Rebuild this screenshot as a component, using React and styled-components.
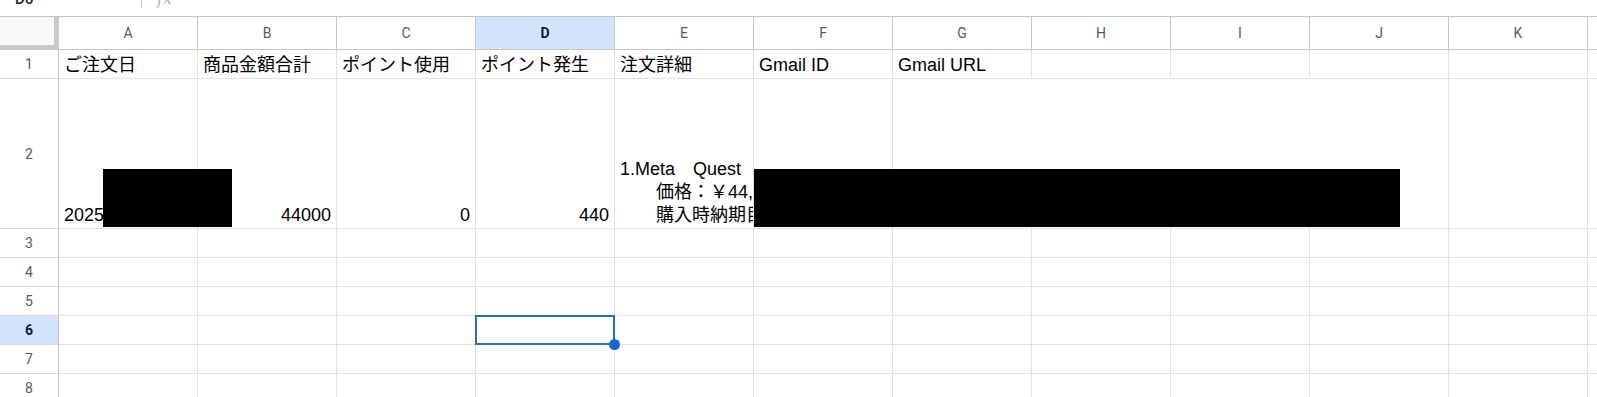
import React from 'react';
import styled, { createGlobalStyle } from 'styled-components';

const GlobalStyle = createGlobalStyle`
  html, body { margin: 0; padding: 0; background: #fff; overflow: hidden; }
  body { font-family: 'Liberation Sans', 'Noto Sans CJK JP', sans-serif; }
  * { box-sizing: border-box; }
`;

const Page = styled.div`
  width: 1597px;
  height: 397px;
  overflow: hidden;
  background: #fff;
`;

const FormulaBar = styled.div`
  height: 41px;
  margin-top: -24px;
  padding-top: 5px;
  border-bottom: 1px solid #c4c7c5;
  display: flex;
  align-items: center;
`;

const NameBox = styled.div`
  width: 141px;
  padding-left: 15px;
  font-family: Roboto, 'Liberation Sans', sans-serif;
  font-size: 15px;
  font-weight: 500;
  color: #1f1f1f;
`;

const Divider = styled.div`
  width: 1px;
  height: 18px;
  background: #c4c7c5;
`;

const Fx = styled.div`
  margin-left: 15px;
  font-family: 'DejaVu Serif', serif;
  font-style: italic;
  font-size: 16px;
  color: #b0b3b8;
`;

const Sheet = styled.div`
  display: grid;
  grid-template-columns: 59px repeat(11, 139px) 1fr;
  grid-template-rows: 33px 29px 150px repeat(6, 29px);
`;

const Corner = styled.div`
  background: #f8f9fa;
  border-right: 5px solid #c7c9cb;
  border-bottom: 5px solid #c7c9cb;
`;

const ColHeader = styled.div`
  display: flex;
  align-items: center;
  justify-content: center;
  border-right: 1px solid #c4c7c5;
  border-bottom: 1px solid #c4c7c5;
  font-family: Roboto, 'Liberation Sans', sans-serif;
  font-size: 14px;
  color: ${(p) => (p.$selected ? '#041e49' : '#575a5c')};
  font-weight: ${(p) => (p.$selected ? 700 : 400)};
  background: ${(p) => (p.$selected ? '#d3e3fd' : '#fff')};
`;

const RowHeader = styled.div`
  display: flex;
  align-items: center;
  justify-content: center;
  border-right: 1px solid #c4c7c5;
  border-bottom: 1px solid #d6d8da;
  font-family: Roboto, 'Liberation Sans', sans-serif;
  font-size: 14px;
  color: ${(p) => (p.$selected ? '#041e49' : '#575a5c')};
  font-weight: ${(p) => (p.$selected ? 700 : 400)};
  background: ${(p) => (p.$selected ? '#d3e3fd' : '#fff')};
`;

const Cell = styled.div`
  position: relative;
  display: flex;
  align-items: flex-end;
  justify-content: ${(p) => (p.$align === 'right' ? 'flex-end' : 'flex-start')};
  grid-column: ${(p) => (p.$span ? `span ${p.$span}` : 'auto')};
  padding: 0 ${(p) => (p.$clip ? 0 : 5)}px 1px 5px;
  border-right: 1px solid #e1e1e1;
  border-bottom: 1px solid #e1e1e1;
  font-size: 18px;
  line-height: 23px;
  color: #000;
  white-space: pre;
  min-width: 0;
`;

const CellText = styled.div`
  overflow: hidden;
  max-width: 100%;
`;

const Redaction = styled.div`
  position: absolute;
  z-index: 2;
  top: 90px;
  height: 58px;
  left: ${(p) => p.$left}px;
  width: ${(p) => p.$width}px;
  background: #000;
`;

const Selection = styled.div`
  position: absolute;
  z-index: 3;
  top: -1px;
  left: -1px;
  right: -1px;
  bottom: -1px;
  border: 2px solid #2f6cc0;
`;

const FillHandle = styled.div`
  position: absolute;
  right: -7px;
  bottom: -7px;
  width: 11px;
  height: 11px;
  border-radius: 50%;
  background: #1a62d6;
`;

const COLS = ['A', 'B', 'C', 'D', 'E', 'F', 'G', 'H', 'I', 'J', 'K', ''];

const ROW1 = ['ご注文日', '商品金額合計', 'ポイント使用', 'ポイント発生', '注文詳細', 'Gmail ID', 'Gmail URL', '', '', '', '', ''];

const DETAIL = '1.Meta\u3000Quest\n\u3000\u3000価格：￥44,000\n\u3000\u3000購入時納期目安：';

function EmptyRow({ n, selectedCol }) {
  return (
    <>
      <RowHeader $selected={n === 6}>{n}</RowHeader>
      {COLS.map((c, i) => (
        <Cell key={i}>
          {n === 6 && c === selectedCol && (
            <Selection>
              <FillHandle />
            </Selection>
          )}
        </Cell>
      ))}
    </>
  );
}

export default function App() {
  return (
    <Page>
      <GlobalStyle />
      <FormulaBar>
        <NameBox>D6</NameBox>
        <Divider />
        <Fx>fx</Fx>
      </FormulaBar>
      <Sheet>
        <Corner />
        {COLS.map((c, i) => (
          <ColHeader key={i} $selected={c === 'D'}>{c}</ColHeader>
        ))}

        <RowHeader>1</RowHeader>
        {ROW1.map((t, i) => (
          <Cell key={i}>
            <CellText>{t}</CellText>
          </Cell>
        ))}

        <RowHeader>2</RowHeader>
        <Cell>
          <CellText>2025</CellText>
          <Redaction $left={44} $width={129} />
        </Cell>
        <Cell $align="right"><CellText>44000</CellText></Cell>
        <Cell $align="right"><CellText>0</CellText></Cell>
        <Cell $align="right"><CellText>440</CellText></Cell>
        <Cell $clip><CellText>{DETAIL}</CellText></Cell>
        <Cell>
          <Redaction $left={0} $width={646} />
        </Cell>
        <Cell $span={4} />
        <Cell />
        <Cell />

        {[3, 4, 5, 6, 7, 8].map((n) => (
          <EmptyRow key={n} n={n} selectedCol="D" />
        ))}
      </Sheet>
    </Page>
  );
}
